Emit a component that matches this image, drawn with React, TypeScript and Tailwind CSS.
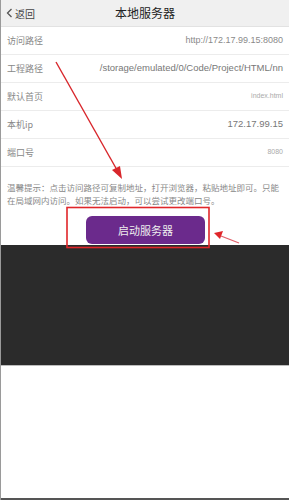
import React from 'react'

const rows = [
  { label: '访问路径', value: 'http://172.17.99.15:8080', cls: 'text-[9px] text-[#8a8a8a]' },
  { label: '工程路径', value: '/storage/emulated/0/Code/Project/HTML/nn', cls: 'text-[9.5px] text-[#777]' },
  { label: '默认首页', value: 'index.html', cls: 'text-[7px] text-[#aaa]' },
  { label: '本机ip', value: '172.17.99.15', cls: 'text-[9.5px] text-[#777]' },
  { label: '端口号', value: '8080', cls: 'text-[7px] text-[#aaa]' },
]

const Annotations = () => (
  <svg className="absolute inset-0 pointer-events-none" width="289" height="500" viewBox="0 0 289 500">
    <rect x="66" y="207.5" width="142" height="40" fill="none" stroke="#e0262a" strokeWidth="1.6" />
    <line x1="55" y1="62" x2="116" y2="170" stroke="#d8262b" strokeWidth="1.4" />
    <polygon points="121,179 111,170 119,166" fill="#d8262b" />
    <line x1="238" y1="243" x2="220" y2="236" stroke="#e0606a" strokeWidth="1.3" />
    <polygon points="213,233 222,231 219,239" fill="#e0262a" />
  </svg>
)

const App = () => {
  return (
    <div className="relative w-[289px] h-[500px] flex flex-col bg-white border-l border-[#9a9a9a] overflow-hidden" style={{ fontFamily: '"Noto Sans CJK SC", "Liberation Sans", sans-serif' }}>
      <div className="h-[27px] flex items-center bg-[#f0f0f0] border-b border-[#e2e2e2] relative">
        <div className="flex items-center pl-[5px] text-[10px] text-[#444] gap-[2px]">
          <svg width="7" height="10" viewBox="0 0 7 10"><path d="M5.5 1 L1.5 5 L5.5 9" fill="none" stroke="#555" strokeWidth="1.3" /></svg>
          <span>返回</span>
        </div>
        <div className="absolute left-0 right-0 text-center text-[12px] text-[#222] pointer-events-none">本地服务器</div>
      </div>
      {rows.map((row, index) => (
        <div key={index} className="h-[28px] flex items-center justify-between px-[6px] border-b border-[#ececec]">
          <span className="text-[9px] text-[#888] shrink-0">{row.label}</span>
          <span className={`${row.cls} whitespace-nowrap`} style={{ fontFamily: '"Liberation Sans", sans-serif' }}>{row.value}</span>
        </div>
      ))}
      <div className="px-[6px] pt-[14px] text-[8.5px] leading-[12.5px] text-[#888]">
        温馨提示：点击访问路径可复制地址，打开浏览器，粘贴地址即可。只能在局域网内访问。如果无法启动，可以尝试更改端口号。
      </div>
      <div className="flex justify-center pt-[10px] h-[39px]">
        <button className="w-[119px] h-[28px] ml-[1px] rounded-[6px] bg-[#6b2a8c] text-[11px] text-[#eee]">启动服务器</button>
      </div>
      <div className="h-[120px] bg-[#2b2b2b]"></div>
      <div className="flex-1 bg-white border-t border-[#bdbdbd] border-b-2 border-b-[#555]"></div>
      <Annotations />
    </div>
  )
}

export default App
